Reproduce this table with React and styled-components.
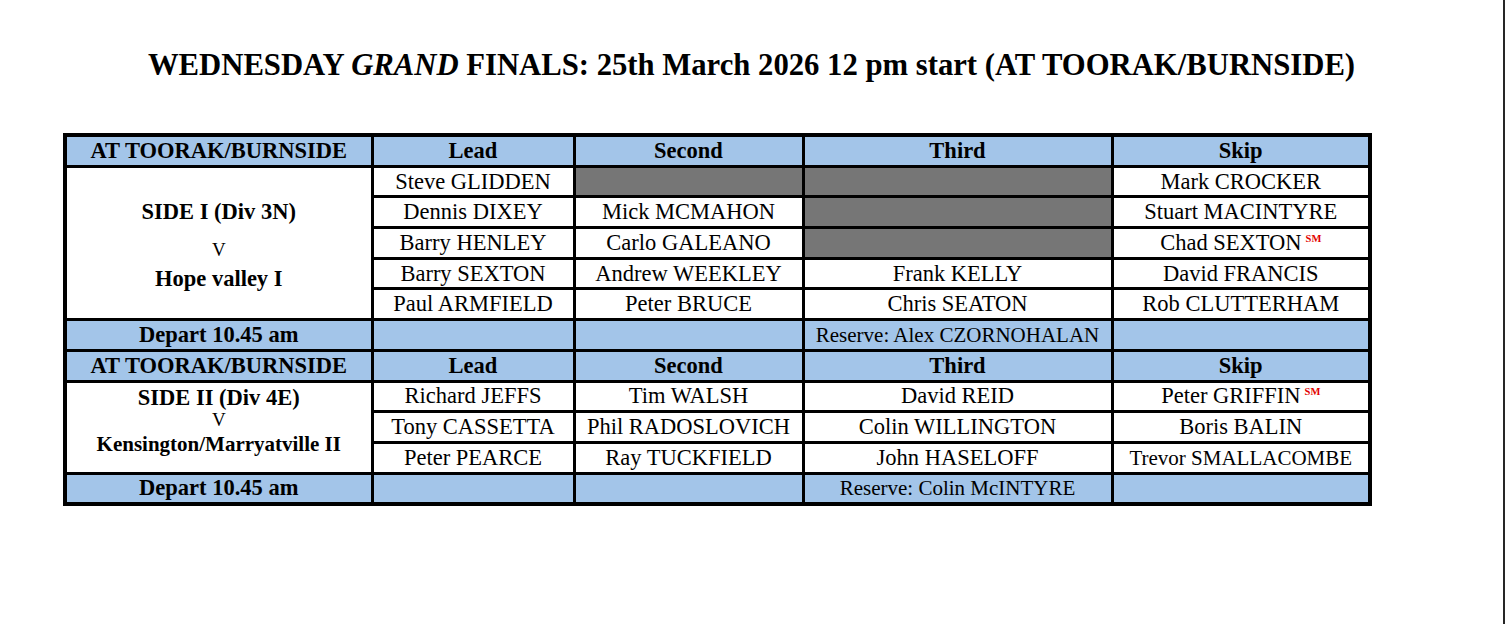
import React from "react";
import styled, { createGlobalStyle } from "styled-components";

const GlobalStyle = createGlobalStyle`
  html, body {
    margin: 0;
    padding: 0;
    background: #fff;
  }
  body {
    font-family: "Liberation Serif", "Times New Roman", serif;
    color: #000;
  }
`;

const Page = styled.div`
  display: flex;
  height: 624px;
  overflow: hidden;
`;

const Sheet = styled.main`
  flex: 1;
  padding-top: 45px;
`;

const Edge = styled.div`
  width: 2px;
  background: #262626;
`;

const Title = styled.h1`
  margin: 0;
  text-align: center;
  font-size: 30.7px;
  font-weight: bold;
  line-height: 40px;
`;

const Table = styled.table`
  border-collapse: collapse;
  table-layout: fixed;
  width: 1305px;
  margin: 48px 0 0 63px;
  border: 4px solid #000;
`;

const tones = {
  blue: "#a3c5e9",
  gray: "#767676",
  white: "#fff",
};

const Cell = styled.td`
  border: 3px solid #000;
  height: 27.7px;
  padding: 0;
  text-align: center;
  vertical-align: middle;
  white-space: nowrap;
  font-size: ${(p) => (p.$small ? "21px" : "22.5px")};
  font-weight: ${(p) => (p.$bold ? "bold" : "normal")};
  line-height: 24px;
  background: ${(p) => tones[p.$tone || "white"]};
`;

const SideCell = styled.td`
  border: 3px solid #000;
  padding: ${(p) => p.$pad}px 0 0;
  text-align: center;
  vertical-align: top;
  background: #fff;
`;

const SideName = styled.div`
  font-weight: bold;
  font-size: ${(p) => (p.$small ? "21px" : "22.5px")};
  line-height: 24px;
  margin-top: ${(p) => p.$gap || 0}px;
`;

const Versus = styled.div`
  font-size: 19px;
  line-height: 20px;
  margin-top: ${(p) => p.$gap}px;
`;

const Sm = styled.sup`
  color: #e30000;
  font-size: 10.5px;
  font-weight: bold;
  line-height: 0;
  margin-left: 4px;
  vertical-align: 8px;
`;

const headings = ["Lead", "Second", "Third", "Skip"];

const sides = [
  {
    pad: 32,
    name: "SIDE I (Div 3N)",
    vsGap: 16,
    opponent: "Hope valley I",
    oppGap: 7,
    oppSmall: false,
    reserve: "Reserve: Alex CZORNOHALAN",
    rows: [
      ["Steve GLIDDEN", null, null, "Mark CROCKER"],
      ["Dennis DIXEY", "Mick MCMAHON", null, "Stuart MACINTYRE"],
      ["Barry HENLEY", "Carlo GALEANO", null, { text: "Chad SEXTON", sm: true }],
      ["Barry SEXTON", "Andrew WEEKLEY", "Frank KELLY", "David FRANCIS"],
      ["Paul ARMFIELD", "Peter BRUCE", "Chris SEATON", "Rob CLUTTERHAM"],
    ],
  },
  {
    pad: 3,
    name: "SIDE II (Div 4E)",
    vsGap: 0,
    opponent: "Kensington/Marryatville II",
    oppGap: 2,
    oppSmall: true,
    reserve: "Reserve: Colin McINTYRE",
    rows: [
      ["Richard JEFFS", "Tim WALSH", "David REID", { text: "Peter GRIFFIN", sm: true }],
      ["Tony CASSETTA", "Phil RADOSLOVICH", "Colin WILLINGTON", "Boris BALIN"],
      ["Peter PEARCE", "Ray TUCKFIELD", "John HASELOFF", { text: "Trevor SMALLACOMBE", small: true }],
    ],
  },
];

function Player({ value }) {
  if (value === null) return <Cell $tone="gray" />;
  if (typeof value === "string") return <Cell>{value}</Cell>;
  return (
    <Cell $small={value.small}>
      {value.text}
      {value.sm && <Sm>SM</Sm>}
    </Cell>
  );
}

function SideBlock({ side }) {
  return (
    <>
      <tr>
        <Cell $tone="blue" $bold>
          AT TOORAK/BURNSIDE
        </Cell>
        {headings.map((h) => (
          <Cell key={h} $tone="blue" $bold>
            {h}
          </Cell>
        ))}
      </tr>
      {side.rows.map((row, i) => (
        <tr key={i}>
          {i === 0 && (
            <SideCell rowSpan={side.rows.length} $pad={side.pad}>
              <SideName>{side.name}</SideName>
              <Versus $gap={side.vsGap}>V</Versus>
              <SideName $gap={side.oppGap} $small={side.oppSmall}>
                {side.opponent}
              </SideName>
            </SideCell>
          )}
          {row.map((p, j) => (
            <Player key={j} value={p} />
          ))}
        </tr>
      ))}
      <tr>
        <Cell $tone="blue" $bold>
          Depart 10.45 am
        </Cell>
        <Cell $tone="blue" />
        <Cell $tone="blue" />
        <Cell $tone="blue" $small>
          {side.reserve}
        </Cell>
        <Cell $tone="blue" />
      </tr>
    </>
  );
}

export default function App() {
  return (
    <Page>
      <GlobalStyle />
      <Sheet>
        <Title>
          WEDNESDAY <i>GRAND</i> FINALS: 25th March 2026 12 pm start (AT TOORAK/BURNSIDE)
        </Title>
        <Table>
          <colgroup>
            <col style={{ width: 307 }} />
            <col style={{ width: 202 }} />
            <col style={{ width: 229 }} />
            <col style={{ width: 309 }} />
            <col style={{ width: 258 }} />
          </colgroup>
          <tbody>
            {sides.map((s, i) => (
              <SideBlock key={i} side={s} />
            ))}
          </tbody>
        </Table>
      </Sheet>
      <Edge />
    </Page>
  );
}
